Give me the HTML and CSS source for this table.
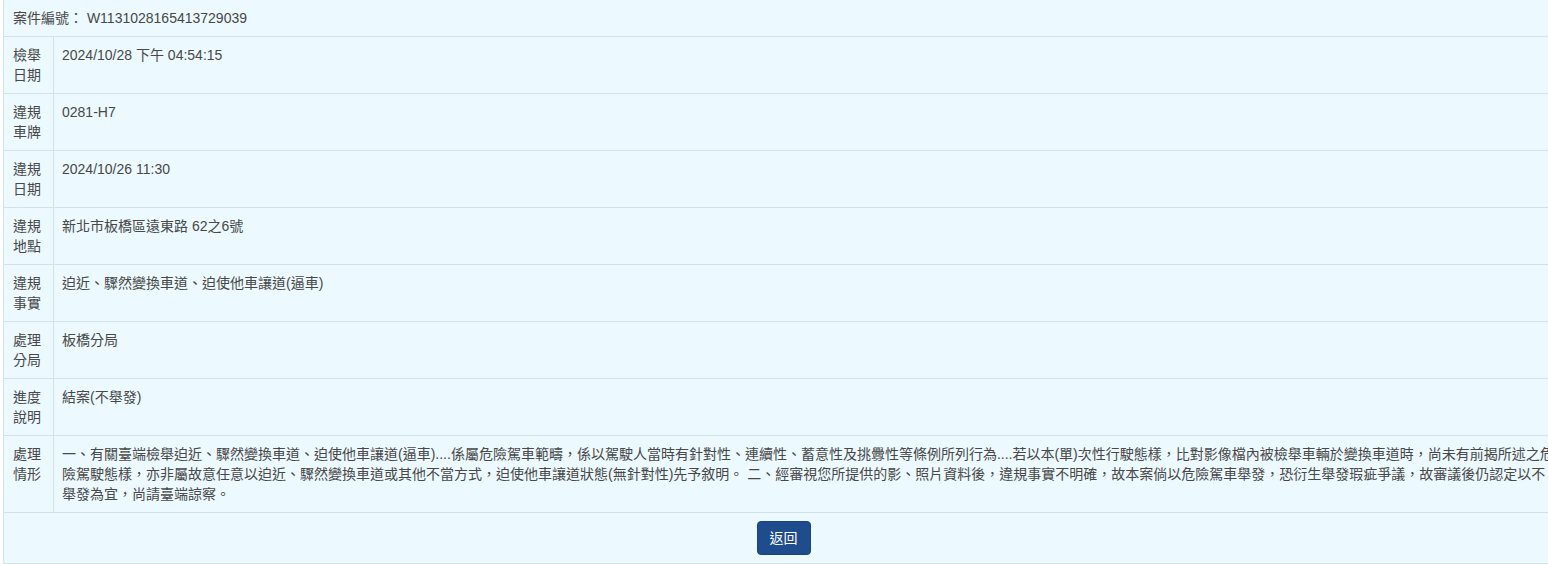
FILE: index.html
```html
<!DOCTYPE html>
<html lang="zh-Hant">
<head>
<meta charset="utf-8">
<title>案件明細</title>
<link rel="stylesheet" href="styles.css">
</head>
<body>
<div class="page">
  <table class="detail">
    <tr>
      <td class="head" colspan="2">案件編號： W1131028165413729039</td>
    </tr>
    <tr>
      <td class="label">檢舉日期</td>
      <td class="value">2024/10/28 下午 04:54:15</td>
    </tr>
    <tr>
      <td class="label">違規車牌</td>
      <td class="value">0281-H7</td>
    </tr>
    <tr>
      <td class="label">違規日期</td>
      <td class="value">2024/10/26 11:30</td>
    </tr>
    <tr>
      <td class="label">違規地點</td>
      <td class="value">新北市板橋區遠東路 62之6號</td>
    </tr>
    <tr>
      <td class="label">違規事實</td>
      <td class="value">迫近、驟然變換車道、迫使他車讓道(逼車)</td>
    </tr>
    <tr>
      <td class="label">處理分局</td>
      <td class="value">板橋分局</td>
    </tr>
    <tr>
      <td class="label">進度說明</td>
      <td class="value">結案(不舉發)</td>
    </tr>
    <tr>
      <td class="label">處理情形</td>
      <td class="value">一、有關臺端檢舉迫近、驟然變換車道、迫使他車讓道(逼車)....係屬危險駕車範疇，係以駕駛人當時有針對性、連續性、蓄意性及挑釁性等條例所列行為....若以本(單)次性行駛態樣，比對影像檔內被檢舉車輛於變換車道時，尚未有前揭所述之危險駕駛態樣，亦非屬故意任意以迫近、驟然變換車道或其他不當方式，迫使他車讓道狀態(無針對性)先予敘明。 二、經審視您所提供的影、照片資料後，違規事實不明確，故本案倘以危險駕車舉發，恐衍生舉發瑕疵爭議，故審議後仍認定以不舉發為宜，尚請臺端諒察。</td>
    </tr>
    <tr>
      <td class="actions" colspan="2"><button class="btn" type="button">返回</button></td>
    </tr>
  </table>
</div>
</body>
</html>
```

FILE: styles.css
```css
html, body {
  margin: 0;
  padding: 0;
  background: #ffffff;
  overflow: hidden;
}

.page {
  padding-left: 3px;
}

.detail {
  width: 1561px;
  border-collapse: collapse;
  background: #ecf9fe;
  font-family: "Liberation Sans", "Noto Sans CJK TC", sans-serif;
  font-size: 14px;
  line-height: 20px;
  color: #484848;
}

.detail td {
  border: 1px solid #d3e3e6;
  padding: 8px;
  vertical-align: top;
  text-align: left;
}

.detail .head {
  border-top: 0;
  padding-left: 9px;
}

.detail .label {
  width: 28px;
  padding-left: 9px;
  padding-right: 12px;
}

.detail .actions {
  text-align: center;
  padding: 8px;
}

.btn {
  font-family: "Liberation Sans", "Noto Sans CJK TC", sans-serif;
  font-size: 14px;
  line-height: 20px;
  color: #ffffff;
  background: #1f4c8c;
  border: 1px solid #1a4480;
  border-radius: 4px;
  padding: 6px 12px;
  margin: 0;
  cursor: pointer;
}
```
